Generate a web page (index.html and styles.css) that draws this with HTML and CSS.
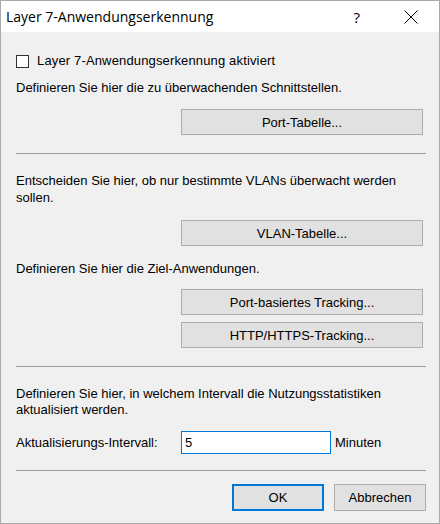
FILE: index.html
```html
<!DOCTYPE html>
<html lang="de">
<head>
<meta charset="utf-8">
<link rel="stylesheet" href="styles.css">
<title>Layer 7-Anwendungserkennung</title>
</head>
<body>
<div class="window">
  <div class="titlebar">
    <span class="title">Layer 7-Anwendungserkennung</span>
    <span class="help">?</span>
    <svg class="close" width="14" height="14" viewBox="0 0 14 14"><path d="M0.5 0.5 L13.5 13.5 M13.5 0.5 L0.5 13.5" stroke="#000" stroke-width="1" fill="none"/></svg>
  </div>
  <div class="content">
    <label class="check-row"><span class="checkbox"></span><span class="check-label">Layer 7-Anwendungserkennung aktiviert</span></label>
    <p class="text t1">Definieren Sie hier die zu überwachenden Schnittstellen.</p>
    <div class="btn-row b1"><button class="btn wide">Port-Tabelle...</button></div>
    <hr class="sep s1">
    <p class="text t2">Entscheiden Sie hier, ob nur bestimmte VLANs überwacht werden sollen.</p>
    <div class="btn-row b2"><button class="btn wide">VLAN-Tabelle...</button></div>
    <p class="text t3">Definieren Sie hier die Ziel-Anwendungen.</p>
    <div class="btn-row b3"><button class="btn wide">Port-basiertes Tracking...</button></div>
    <div class="btn-row b4"><button class="btn wide">HTTP/HTTPS-Tracking...</button></div>
    <hr class="sep s2">
    <p class="text t4">Definieren Sie hier, in welchem Intervall die Nutzungsstatistiken aktualisiert werden.</p>
    <div class="input-row">
      <span class="lbl">Aktualisierungs-Intervall:</span>
      <span class="input">5</span>
      <span class="unit">Minuten</span>
    </div>
    <hr class="sep s3">
    <div class="footer">
      <button class="btn small default">OK</button>
      <button class="btn small">Abbrechen</button>
    </div>
  </div>
</div>
</body>
</html>
```
FILE: styles.css
```css
* { box-sizing: border-box; }
html, body { margin: 0; padding: 0; background: #f0f0f0; }
.window {
  width: 440px;
  height: 524px;
  border: 1px solid #aaaaaa;
  background: #f0f0f0;
  font-family: "Liberation Sans", Arial, sans-serif;
  font-size: 13px;
  color: #000;
  display: flex;
  flex-direction: column;
}
.titlebar {
  height: 31px;
  background: #fff;
  display: flex;
  align-items: center;
  padding-left: 5px;
  flex: none;
}
.title {
  font-family: "Open Sans", "Noto Sans", sans-serif;
  font-size: 14px;
  color: #000;
  flex: 1;
}
.help {
  font-family: "Open Sans", sans-serif;
  font-size: 15px;
  margin-right: 44px;
}
.close { margin-right: 21px; }
.content {
  padding: 21px 13px 0 15px;
  display: flex;
  flex-direction: column;
}
.check-row {
  height: 16px;
  line-height: 16px;
  display: flex;
  align-items: center;
}
.check-label { letter-spacing: 0.15px; }
.checkbox {
  width: 13px;
  height: 13px;
  border: 1px solid #333;
  background: #fff;
  margin-right: 8px;
}
.text { margin: 0; line-height: 16px; max-width: 395px; }
.t1 { margin-top: 11px; }
.t2 { margin-top: 18px; line-height: 17px; }
.t3 { margin-top: 15px; }
.t4 { margin-top: 19px; }
.btn-row { display: flex; justify-content: flex-end; padding-right: 3px; }
.b1 { margin-top: 13px; }
.b2 { margin-top: 14px; }
.b3 { margin-top: 12px; }
.b4 { margin-top: 7px; }
.btn {
  font-family: "Liberation Sans", Arial, sans-serif;
  font-size: 13px;
  color: #000;
  background: #e1e1e1;
  border: 1px solid #adadad;
  padding: 0;
  margin: 0;
}
.wide { width: 242px; height: 26px; }
.sep {
  margin: 0;
  border: 0;
  height: 1px;
  background: #a0a0a0;
}
.s1 { margin-top: 18px; }
.s2 { margin-top: 18px; }
.s3 { margin-top: 16px; }
.input-row {
  margin-top: 13px;
  height: 23px;
  display: flex;
  align-items: center;
}
.lbl { width: 165px; }
.input {
  width: 150px;
  height: 23px;
  border: 1px solid #0078d7;
  background: #fff;
  padding-left: 3px;
  line-height: 21px;
}
.unit { margin-left: 4px; }
.footer {
  margin-top: 13px;
  display: flex;
  justify-content: flex-end;
  gap: 10px;
}
.small { width: 92px; height: 27px; }
.default { border: 2px solid #0078d7; }
```
